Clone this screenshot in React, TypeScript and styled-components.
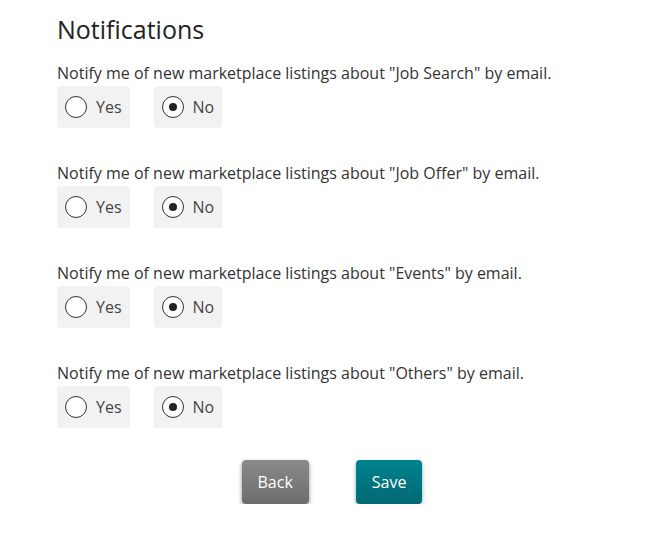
import React, { useState } from 'react';
import styled, { createGlobalStyle } from 'styled-components';

const GlobalStyle = createGlobalStyle`
  body {
    margin: 0;
    background: #fff;
    font-family: "Open Sans", "Liberation Sans", sans-serif;
    color: #333;
  }
`;

const Page = styled.div`
  width: 550px;
  padding: 14px 0 0 57px;
`;

const Title = styled.h2`
  margin: 0 0 19px;
  font-size: 25px;
  font-weight: 400;
  line-height: 30px;
  color: #222;
`;

const Group = styled.div`
  margin-bottom: 35px;
`;

const Question = styled.div`
  font-size: 16px;
  line-height: 20px;
  color: #333;
  margin-bottom: 3px;
`;

const Options = styled.div`
  display: flex;
  gap: 24px;
`;

const Option = styled.label`
  display: flex;
  align-items: center;
  gap: 9px;
  height: 42px;
  padding: 0 8px;
  box-sizing: border-box;
  background: #f2f2f2;
  border-radius: 3px;
  font-size: 16px;
  color: #444;
  cursor: pointer;
`;

const Circle = styled.span<{ checked: boolean }>`
  width: 22px;
  height: 22px;
  box-sizing: border-box;
  border: 1.5px solid #333;
  border-radius: 50%;
  background: #fff;
  display: flex;
  align-items: center;
  justify-content: center;
  &::after {
    content: '';
    width: 8px;
    height: 8px;
    border-radius: 50%;
    background: ${({ checked }) => (checked ? '#222' : 'transparent')};
  }
`;

const Actions = styled.div`
  display: flex;
  justify-content: center;
  gap: 47px;
  margin-top: -3px;
`;

const Button = styled.button<{ variant: 'back' | 'save' }>`
  height: 44px;
  padding: 0 16px;
  border: none;
  border-radius: 4px;
  font-family: "Open Sans", "Liberation Sans", sans-serif;
  font-size: 16px;
  font-weight: 500;
  color: #fff;
  cursor: pointer;
  background: ${({ variant }) =>
    variant === 'back'
      ? 'linear-gradient(#8a8a8a, #6d6d6d)'
      : 'linear-gradient(#00838f, #006873)'};
  box-shadow: ${({ variant }) =>
    variant === 'back'
      ? '0 2px 4px rgba(0, 0, 0, 0.45)'
      : '0 2px 4px rgba(0, 104, 115, 0.5)'};
`;

const topics = ['Job Search', 'Job Offer', 'Events', 'Others'];

export default function App() {
  const [answers, setAnswers] = useState<Record<string, boolean>>({});

  return (
    <Page>
      <GlobalStyle />
      <Title>Notifications</Title>
      {topics.map((topic) => {
        const yes = answers[topic] === true;
        return (
          <Group key={topic}>
            <Question>
              Notify me of new marketplace listings about "{topic}" by email.
            </Question>
            <Options>
              <Option onClick={() => setAnswers({ ...answers, [topic]: true })}>
                <Circle checked={yes} />
                Yes
              </Option>
              <Option onClick={() => setAnswers({ ...answers, [topic]: false })}>
                <Circle checked={!yes} />
                No
              </Option>
            </Options>
          </Group>
        );
      })}
      <Actions>
        <Button variant="back">Back</Button>
        <Button variant="save">Save</Button>
      </Actions>
    </Page>
  );
}
